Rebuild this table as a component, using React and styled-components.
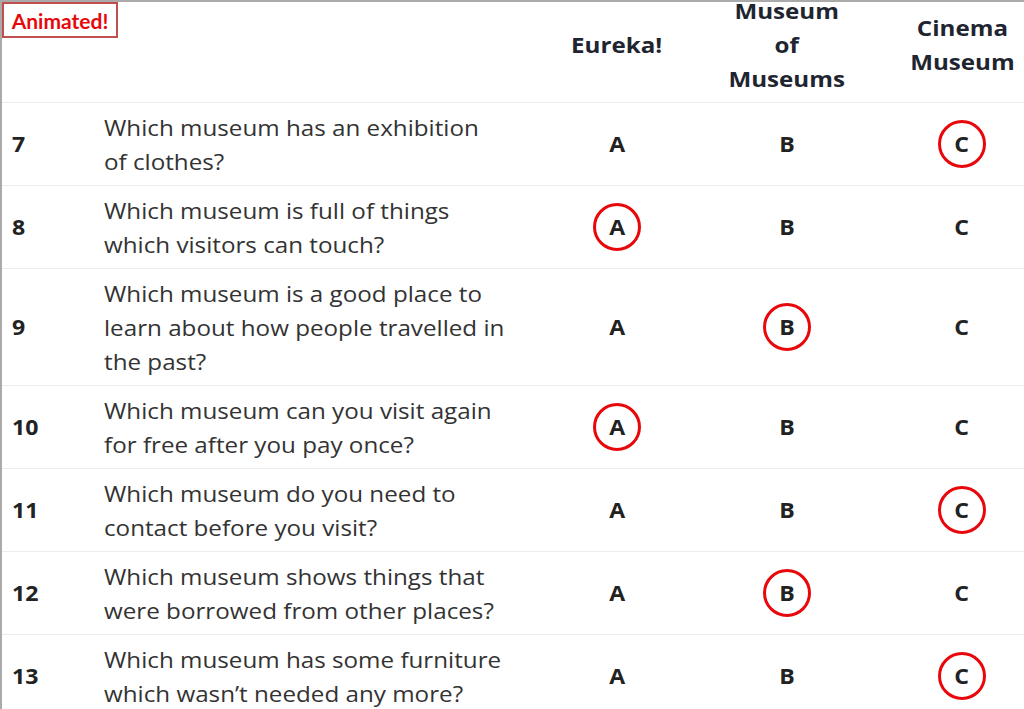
import React from 'react'
import styled, { createGlobalStyle } from 'styled-components'

const GlobalStyle = createGlobalStyle`
  html, body {
    margin: 0;
    padding: 0;
    overflow: hidden;
    background: #fff;
  }
  body {
    font-family: "Open Sans", "Noto Sans", sans-serif;
  }
`;

const Page = styled.div`
  position: relative;
  width: 1052px;
  border-top: 2px solid #aaa;
  border-left: 2px solid #aaa;
`;

const Badge = styled.div`
  position: absolute;
  top: 0;
  left: 0;
  width: 112px;
  height: 32px;
  border: 2px solid #c0504d;
  background: #fff;
  color: #e8080c;
  font-family: Lato, "Liberation Sans", sans-serif;
  font-weight: 700;
  font-size: 21px;
  display: flex;
  align-items: center;
  justify-content: center;
  z-index: 2;
`;

const Row = styled.div`
  display: grid;
  grid-template-columns: 90px 440px 170px 170px 180px;
  border-bottom: 1px solid #ececec;
  align-items: center;
`;

const HeadRow = styled(Row)`
  height: 100px;
  align-items: start;
`;

const Wide = styled.span`
  display: inline-block;
  transform: scaleX(${p => p.$x || 1.1});
  transform-origin: ${p => (p.$left ? 'left center' : 'center center')};
`;

const HeadCell = styled.div`
  height: 86px;
  display: flex;
  align-items: center;
  justify-content: center;
  text-align: center;
  font-weight: 700;
  font-size: 21px;
  line-height: 34px;
  color: #1f2530;
`;

const BodyRow = styled(Row)`
  padding: 7px 0;
`;

const Num = styled.div`
  padding-left: 10px;
  font-weight: 700;
  font-size: 21px;
  color: #222;
`;

const Question = styled.div`
  padding-left: 12px;
  font-size: 22px;
  line-height: 34px;
  color: #333;
  white-space: nowrap;
`;

const Line = styled.div`
  transform: scaleX(1.1);
  transform-origin: left center;
`;

const Choice = styled.div`
  display: flex;
  justify-content: center;
  align-items: center;
  font-weight: 700;
  font-size: 21px;
  color: #222;
`;

const Mark = styled.span`
  width: 48px;
  height: 48px;
  box-sizing: border-box;
  display: flex;
  align-items: center;
  justify-content: center;
  border-radius: 50%;
  border: 3.5px solid ${p => (p.$on ? '#e8080c' : 'transparent')};
`;

const rows = [
  { n: 7, q: ['Which museum has an exhibition', 'of clothes?'], a: 'C' },
  { n: 8, q: ['Which museum is full of things', 'which visitors can touch?'], a: 'A' },
  { n: 9, q: ['Which museum is a good place to', 'learn about how people travelled in', 'the past?'], a: 'B' },
  { n: 10, q: ['Which museum can you visit again', 'for free after you pay once?'], a: 'A' },
  { n: 11, q: ['Which museum do you need to', 'contact before you visit?'], a: 'C' },
  { n: 12, q: ['Which museum shows things that', 'were borrowed from other places?'], a: 'B' },
  { n: 13, q: ['Which museum has some furniture', 'which wasn\u2019t needed any more?'], a: 'C' },
];

const App = () => {
  return (
    <>
      <GlobalStyle />
      <Page>
        <Badge>Animated!</Badge>
        <HeadRow>
          <div />
          <div />
          <HeadCell><Wide $x={1.15}>Eureka!</Wide></HeadCell>
          <HeadCell><Wide $x={1.15}>Museum<br />of<br />Museums</Wide></HeadCell>
          <HeadCell><Wide $x={1.15}>Cinema<br />Museum</Wide></HeadCell>
        </HeadRow>
        {rows.map(r => (
          <BodyRow key={r.n}>
            <Num><Wide $left>{r.n}</Wide></Num>
            <Question>
              {r.q.map((line, i) => (
                <Line key={i}>{line}</Line>
              ))}
            </Question>
            {['A', 'B', 'C'].map(c => (
              <Choice key={c}>
                <Mark $on={r.a === c}><Wide>{c}</Wide></Mark>
              </Choice>
            ))}
          </BodyRow>
        ))}
      </Page>
    </>
  )
}

export default App;
